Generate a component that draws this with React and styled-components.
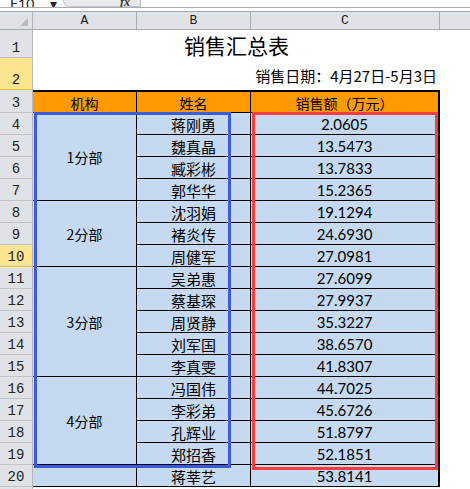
import React from 'react';
import styled, { createGlobalStyle } from 'styled-components';

const GlobalStyle = createGlobalStyle`
  html, body {
    margin: 0;
    padding: 0;
    background: #ffffff;
    overflow: hidden;
  }
`;

const CJK = `"Noto Sans CJK SC", "Noto Sans", sans-serif`;
const NUM = `Lato, "Noto Sans CJK SC", sans-serif`;
const HEAD = `"Liberation Mono", "DejaVu Sans Mono", monospace`;

const Window = styled.div`
  width: 470px;
  height: 489px;
  overflow: hidden;
  background: #ffffff;
`;

const FormulaBar = styled.div`
  display: flex;
  height: 7px;
  border-bottom: 1px solid #a9adb3;
  overflow: hidden;
  font-family: ${NUM};
  font-size: 14px;
`;

const NameBox = styled.div`
  width: 63px;
  display: flex;
  align-items: flex-end;
  gap: 16px;
  padding-left: 10px;
  box-sizing: border-box;
  line-height: 14px;
  color: #222;
  & > span { margin-bottom: -4px; }
`;

const FxPill = styled.div`
  width: 77px;
  background: #e9eaec;
  border-bottom-left-radius: 10px;
  border-left: 1px solid #c4c7cb;
  border-bottom: 1px solid #c4c7cb;
  box-sizing: border-box;
  display: flex;
  justify-content: flex-end;
  align-items: flex-end;
  padding-right: 10px;
  font-style: italic;
  font-family: "Liberation Serif", serif;
  font-weight: bold;
  font-size: 12px;
  line-height: 12px;
  color: #333;
  & > span { margin-bottom: -2px; }
`;

const FormulaInput = styled.div`
  flex: 1;
  border-left: 1px solid #b8bcc2;
  background: #fff;
`;

const Spacer = styled.div`
  height: 3px;
`;

const Sheet = styled.div`
  position: relative;
  display: grid;
  grid-template-columns: 33px 104px 114px 189px 30px;
  grid-template-rows: 19px 28px 32px 23px repeat(18, 22px);
`;

const Corner = styled.div`
  grid-row: 1;
  grid-column: 1;
  position: relative;
  background: #dfe2e6;
  border-top: 1px solid #a4a9b0;
  border-bottom: 1px solid #a4a9b0;
  border-right: 1px solid #b3b7bd;
  box-sizing: border-box;
  &::after {
    content: "";
    position: absolute;
    right: 4px;
    bottom: 3px;
    border-style: solid;
    border-width: 0 0 8px 8px;
    border-color: transparent transparent #b9bdc3 transparent;
  }
`;

const ColHead = styled.div`
  grid-row: 1;
  grid-column: ${p => p.$col};
  background: #dfe2e6;
  border-top: 1px solid #a4a9b0;
  border-bottom: 1px solid #a4a9b0;
  border-right: ${p => (p.$last ? 'none' : '1px solid #a9aeb5')};
  box-sizing: border-box;
  display: flex;
  align-items: center;
  justify-content: center;
  font-family: ${HEAD};
  font-size: 13px;
  color: #222;
`;

const RowHead = styled.div`
  grid-row: ${p => p.$row};
  grid-column: 1;
  background: ${p => (p.$active ? '#fde48f' : '#dfe2e6')};
  border-right: 1px solid #b3b7bd;
  border-bottom: 1px solid ${p => (p.$active ? '#efbe4c' : '#c0c4c9')};
  box-sizing: border-box;
  display: flex;
  align-items: flex-end;
  justify-content: center;
  padding-bottom: 1px;
  font-family: ${HEAD};
  font-size: 14px;
  line-height: 16px;
  color: #222;
`;

const TitleCell = styled.div`
  grid-row: 2;
  grid-column: 2 / 5;
  display: flex;
  align-items: flex-end;
  justify-content: center;
  font-family: ${CJK};
  font-size: 21px;
  line-height: 26px;
  color: #000;
`;

const DateCell = styled.div`
  grid-row: 3;
  grid-column: 2 / 5;
  display: flex;
  align-items: flex-end;
  justify-content: flex-end;
  padding: 0 3px 4px 0;
  font-family: ${CJK};
  font-size: 15px;
  line-height: 20px;
  color: #000;
`;

const Cell = styled.div`
  grid-row: ${p => p.$row} / span ${p => p.$span || 1};
  grid-column: ${p => p.$col};
  background: ${p => (p.$head ? '#ff9a00' : '#c5d9f1')};
  border-top: ${p => (p.$head ? '2px solid #000' : 'none')};
  border-bottom: 1px solid #000;
  border-right: ${p => (p.$col === 4 ? '2px solid #000' : '1px solid #000')};
  box-sizing: border-box;
  display: flex;
  align-items: center;
  justify-content: center;
  padding-top: 1px;
  font-family: ${p => (p.$num ? NUM : CJK)};
  font-size: ${p => (p.$num ? '15px' : p.$small ? '14px' : '15px')};
  color: #000;
  white-space: nowrap;
`;

const Box = styled.div`
  position: absolute;
  left: ${p => p.$left}px;
  top: ${p => p.$top}px;
  width: ${p => p.$w}px;
  height: ${p => p.$h}px;
  border: 3px solid ${p => p.$color};
  box-sizing: border-box;
  pointer-events: none;
`;

const groups = [
  {
    dept: '1分部',
    people: [
      ['蒋刚勇', '2.0605'],
      ['魏真晶', '13.5473'],
      ['臧彩彬', '13.7833'],
      ['郭华华', '15.2365'],
    ],
  },
  {
    dept: '2分部',
    people: [
      ['沈羽娟', '19.1294'],
      ['褚炎传', '24.6930'],
      ['周健军', '27.0981'],
    ],
  },
  {
    dept: '3分部',
    people: [
      ['吴弟惠', '27.6099'],
      ['蔡基琛', '27.9937'],
      ['周贤静', '35.3227'],
      ['刘军国', '38.6570'],
      ['李真雯', '41.8307'],
    ],
  },
  {
    dept: '4分部',
    people: [
      ['冯国伟', '44.7025'],
      ['李彩弟', '45.6726'],
      ['孔辉业', '51.8797'],
      ['郑招香', '52.1851'],
    ],
  },
  {
    dept: '',
    people: [['蒋莘艺', '53.8141']],
  },
];

const activeRows = [2, 10];

function App() {
  // sheet row n sits on grid line n + 1 (first grid row is the column header)
  const bodyCells = [];
  let excelRow = 4;
  groups.forEach((g, gi) => {
    bodyCells.push(
      <Cell key={'d' + gi} $row={excelRow + 1} $span={g.people.length} $col={2} $small>
        {g.dept}
      </Cell>
    );
    g.people.forEach(([name, amount]) => {
      bodyCells.push(
        <Cell key={'n' + excelRow} $row={excelRow + 1} $col={3}>{name}</Cell>,
        <Cell key={'a' + excelRow} $row={excelRow + 1} $col={4} $num>{amount}</Cell>
      );
      excelRow += 1;
    });
  });

  const rowHeads = [];
  for (let r = 1; r <= 21; r++) {
    rowHeads.push(
      <RowHead key={r} $row={r + 1} $active={activeRows.includes(r)}>{r}</RowHead>
    );
  }

  return (
    <>
      <GlobalStyle />
      <Window>
        <FormulaBar>
          <NameBox>
            <span>E10</span>
            <span>▾</span>
          </NameBox>
          <FxPill><span>fx</span></FxPill>
          <FormulaInput />
        </FormulaBar>
        <Spacer />
        <Sheet>
          <Corner />
          <ColHead $col={2}>A</ColHead>
          <ColHead $col={3}>B</ColHead>
          <ColHead $col={4}>C</ColHead>
          <ColHead $col={5} $last />
          {rowHeads}
          <TitleCell>销售汇总表</TitleCell>
          <DateCell>销售日期：4月27日-5月3日</DateCell>
          <Cell $row={4} $col={2} $head $small>机构</Cell>
          <Cell $row={4} $col={3} $head $small>姓名</Cell>
          <Cell $row={4} $col={4} $head $small>销售额（万元）</Cell>
          {bodyCells}
          <Box $left={34} $top={101} $w={197} $h={356} $color="#3c5bd8" />
          <Box $left={252} $top={101} $w={186} $h={358} $color="#fb3b40" />
        </Sheet>
      </Window>
    </>
  );
}

export default App;
